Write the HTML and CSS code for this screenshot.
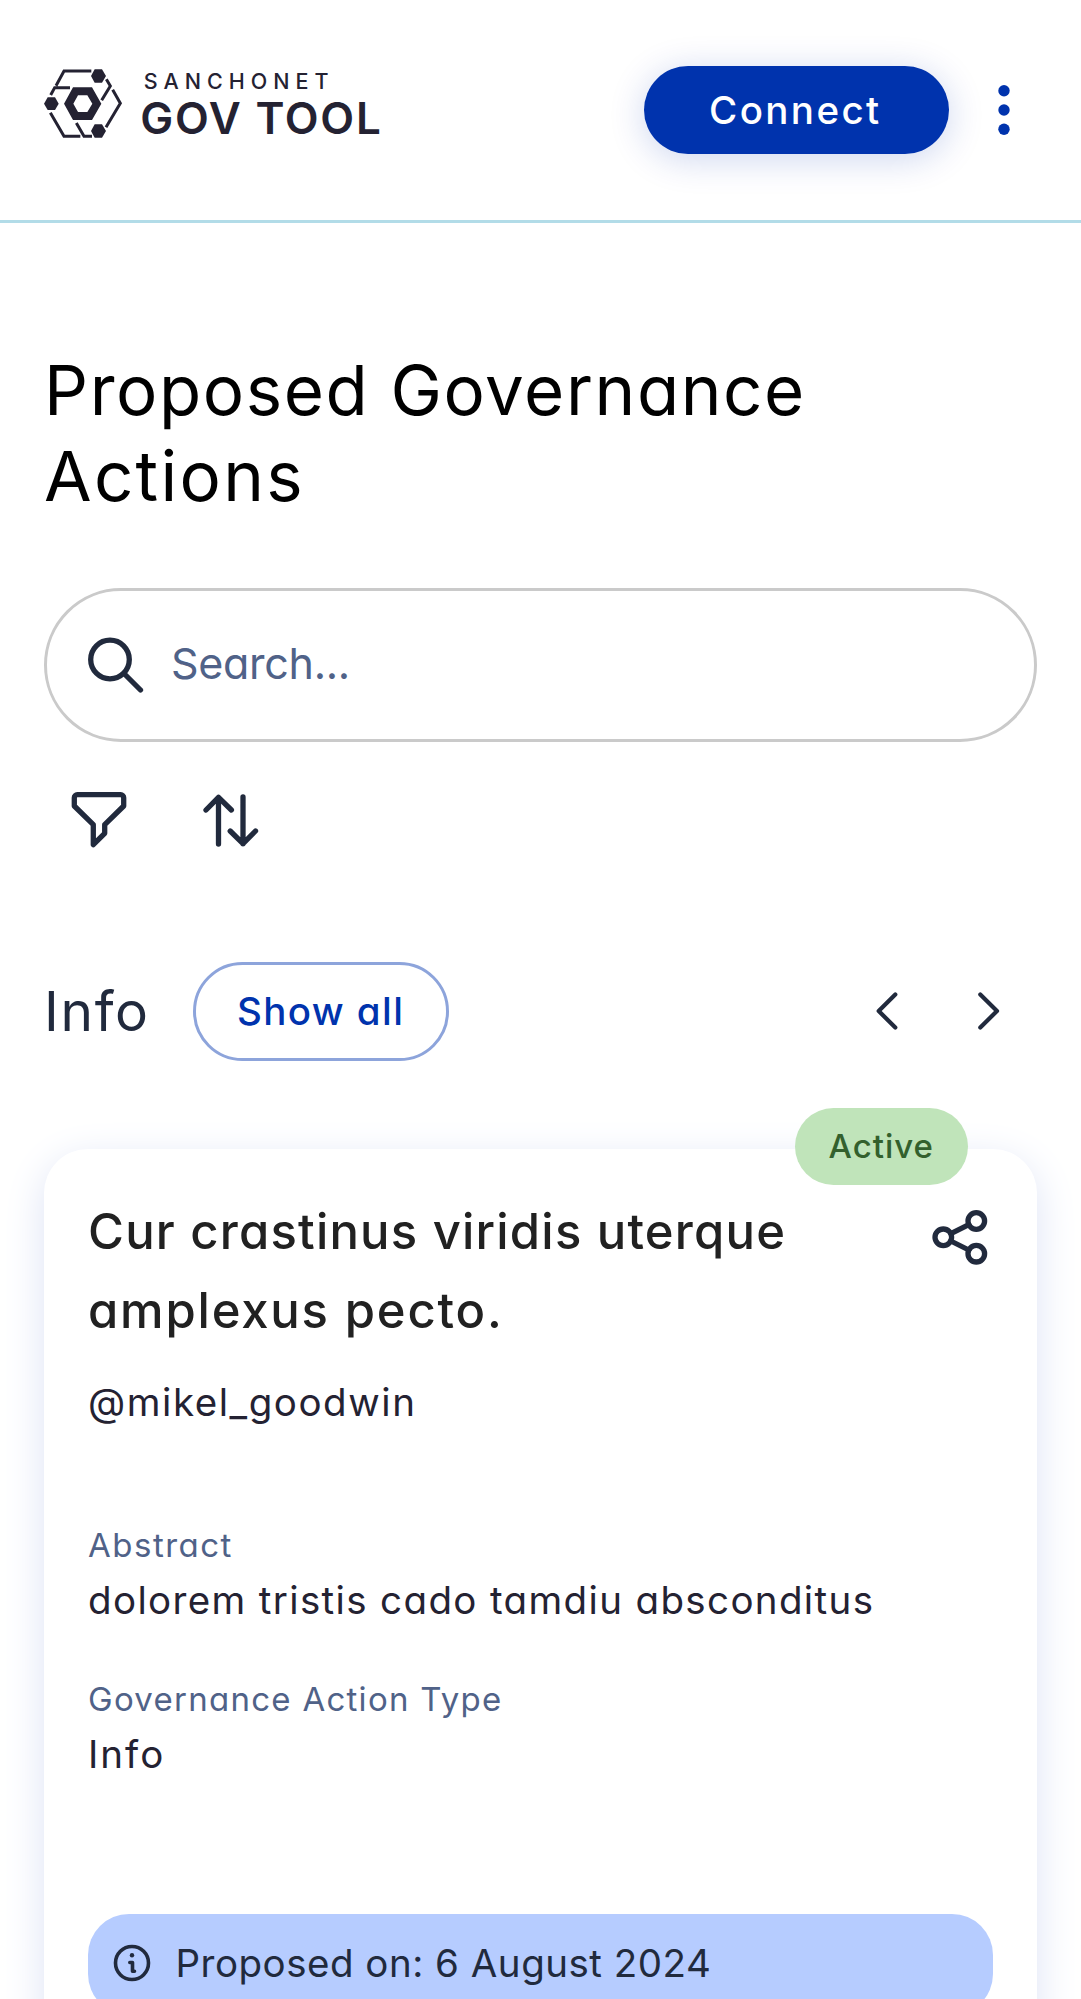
FILE: index.html
```html
<!DOCTYPE html>
<html lang="en">
<head>
<meta charset="utf-8">
<title>SanchoNet GovTool</title>
<link rel="stylesheet" href="styles.css">
</head>
<body>
<header class="topbar">
  <div class="logo">
    <svg class="logo-mark" viewBox="0 0 236 208" fill="none">
      <g fill="currentColor">
        <path d="M0 104l11-19h22l11 19-11 19H11z"/>
        <path d="M141 21l11-20h22l12 20-12 20h-22z"/>
        <path d="M141 186l11-20h22l12 20-12 20h-22z"/>
        <path fill-rule="evenodd" d="M60 104l27-49h57l28 49-28 49H87zM88 104l14 25h28l15-25-15-25h-28z"/>
      </g>
      <path stroke="currentColor" stroke-width="9" d="M36 50L60 6h82M20 78l12-22h46M187 31l12 20-26 43M206 62l23 41-43 72M19 131l41 71h49M97 162l23 40h24"/>
    </svg>
    <div class="logo-text">
      <span class="logo-net">SANCHONET</span>
      <span class="logo-name">GOV TOOL</span>
    </div>
  </div>
  <div class="topbar-actions">
    <button class="connect">Connect</button>
    <svg class="dots" viewBox="0 0 22 60" fill="currentColor"><circle cx="11" cy="10.8" r="5.7"/><circle cx="11" cy="30" r="5.7"/><circle cx="11" cy="49.3" r="5.7"/></svg>
  </div>
</header>
<main class="page">
  <h1 class="title">Proposed Governance <span class="wide">Actions</span></h1>
  <div class="search">
    <svg class="icon" viewBox="0 0 66 66"><circle cx="27" cy="27.5" r="19.3"/><path d="M41 41.5l16.500 16.500"/></svg>
    <span class="placeholder">Search...</span>
  </div>
  <div class="tools">
    <svg class="icon" viewBox="0 0 66 66"><path d="M11.300 7.700H54.700a3 3 0 0 1 3 3V19L38.700 37.700v8.600L27.300 57.700v-20L8.300 19v-8.300a3 3 0 0 1 3-3z"/></svg>
    <svg class="icon" viewBox="0 0 66 66"><path d="M20.500 57V10.500M8 23l12.500-12.700L33.400 23M45 10v46.700M32.200 44L45 56.700 57.500 44"/></svg>
  </div>
  <section>
    <div class="section-head">
      <h2 class="section-title">Info</h2>
      <button class="show-all">Show all</button>
      <div class="pager">
        <svg class="icon thin" viewBox="0 0 66 66"><path d="M41.300 16.500L24.700 33l16.600 16.500"/></svg>
        <svg class="icon thin" viewBox="0 0 66 66"><path d="M24.300 16.500L41 33 24.300 49.500"/></svg>
      </div>
    </div>
    <article class="card">
      <span class="badge">Active</span>
      <div class="card-head">
        <h3 class="card-title">Cur crastinus viridis uterque <span class="wide">amplexus pecto.</span></h3>
        <svg class="icon share" viewBox="0 0 66 66"><circle cx="16.300" cy="33.300" r="8.300"/><circle cx="49.300" cy="17" r="8.300"/><circle cx="49.300" cy="49.700" r="8.300"/><path d="M23.800 29.600l18-8.900M23.800 37l18 9"/></svg>
      </div>
      <p class="value author">@mikel_goodwin</p>
      <p class="label abstract">Abstract</p>
      <p class="value">dolorem tristis cado tamdiu absconditus</p>
      <p class="label type">Governance Action Type</p>
      <p class="value short">Info</p>
      <div class="date">
        <svg class="info" viewBox="0 0 44 44"><circle cx="22" cy="22" r="16.500"/><path d="M19.800 21.500h2.700v8.800h2"/><circle class="dot" cx="22" cy="14.300" r="2.200"/></svg>
        <span>Proposed on: 6 August 2024</span>
      </div>
    </article>
  </section>
</main>
</body>
</html>
```
FILE: styles.css
```css
* { box-sizing: border-box; }

body {
  margin: 0;
  height: 1999px;
  overflow: hidden;
  background: #fff;
  color: #242232;
  font-family: Inter, sans-serif;
  font-feature-settings: "cv11";
}

h1, h2, h3, p { margin: 0; font-weight: 400; }
button { font: inherit; font-feature-settings: inherit; text-align: left; }
svg { display: block; flex: none; }

.icon {
  width: 66px;
  height: 66px;
  fill: none;
  stroke: #212a3d;
  stroke-width: 5.3;
  stroke-linecap: round;
  stroke-linejoin: round;
}
.icon.thin { stroke-width: 4.2; }

.topbar {
  display: flex;
  justify-content: space-between;
  height: 223px;
  padding: 66px 77px 0 44px;
  border-bottom: 3px solid #b2dce8;
}
.logo { display: flex; gap: 17.500px; padding-top: 3px; }
.logo-mark { width: 78.700px; height: 69.300px; }
.logo-text { display: flex; flex-direction: column; gap: 3px; }
.logo-net { padding-left: 3.500px; font-size: 21.500px; font-weight: 500; line-height: 24px; letter-spacing: 6px; }
.logo-name { font-size: 44px; font-weight: 600; line-height: 44px; letter-spacing: 1.750px; white-space: nowrap; }

.topbar-actions { display: flex; gap: 43.500px; margin-right: -10.500px; }
.connect {
  width: 305.500px;
  height: 88px;
  padding: 0 0 0 65.500px;
  border: 0;
  border-radius: 44px;
  background: #0033ad;
  color: #fff;
  font-size: 38.500px;
  font-weight: 500;
  letter-spacing: 2.400px;
  box-shadow: 0 5px 36px rgba(0, 51, 173, 0.2);
}
.dots { width: 22px; height: 60px; margin-top: 14px; color: #0033ad; }

.page { padding: 124px 44px 0; }
.title { color: #000; font-size: 69px; line-height: 86px; letter-spacing: 1.580px; }
.title .wide { letter-spacing: 2.300px; }

.search {
  display: flex;
  align-items: center;
  gap: 22px;
  height: 154px;
  margin-top: 68.500px;
  padding: 0 36px;
  border: 3px solid #cacaca;
  border-radius: 77px;
}
.placeholder { padding-bottom: 4px; color: #506288; font-size: 43px; letter-spacing: -0.300px; }

.tools { display: flex; gap: 66px; padding: 45px 22px 0; }

.section-head { display: flex; align-items: center; height: 99px; margin-top: 109px; }
.section-title { width: 148.500px; color: #212a3d; font-size: 55px; letter-spacing: 1.700px; }
.show-all {
  width: 256px;
  height: 99px;
  padding: 0 0 0 41.500px;
  border: 3px solid #8da4db;
  border-radius: 50px;
  background: #fff;
  color: #0033ad;
  font-size: 38.500px;
  font-weight: 500;
  letter-spacing: 1.400px;
}
.pager { display: flex; gap: 36px; margin: 0 15px 0 auto; }

.card {
  position: relative;
  height: 900px;
  margin-top: 88px;
  padding: 43px 44px;
  border-radius: 44px;
  background: #fff;
  box-shadow: 0 11px 41px #dde3f5;
}
.badge {
  position: absolute;
  top: -41px;
  right: 69px;
  width: 173px;
  height: 77px;
  padding-left: 33.500px;
  border-radius: 38.500px;
  background: #c0e4ba;
  color: #33602d;
  font-size: 33px;
  font-weight: 500;
  line-height: 77px;
  letter-spacing: 1px;
}
.card-head { display: flex; justify-content: space-between; }
.card-title {
  width: 740px;
  color: #212121;
  font-size: 49px;
  font-weight: 500;
  line-height: 79px;
  letter-spacing: 1.200px;
}
.card-title .wide { letter-spacing: 1.810px; }
.share { margin-top: 12px; }

.value { font-size: 38.500px; line-height: 56px; letter-spacing: 1.360px; }
.label { margin-bottom: 3px; color: #506288; font-size: 33px; line-height: 48px; letter-spacing: 1.270px; }
.author { margin-top: 24px; letter-spacing: 1.550px; }
.short { letter-spacing: 2px; }
.abstract { margin-top: 91px; letter-spacing: 1.500px; }
.type { margin-top: 47px; }

.date {
  display: flex;
  align-items: center;
  gap: 21.500px;
  height: 101px;
  margin-top: 132px;
  padding: 0 22px 2px;
  border-radius: 41px;
  background: #b6ccff;
  color: #212a3d;
  font-size: 38.500px;
  letter-spacing: 0.500px;
}
.info { width: 44px; height: 44px; fill: none; stroke: #212a3d; stroke-width: 3.600; stroke-linecap: round; stroke-linejoin: round; }
.dot { fill: #212a3d; stroke: none; }
```
